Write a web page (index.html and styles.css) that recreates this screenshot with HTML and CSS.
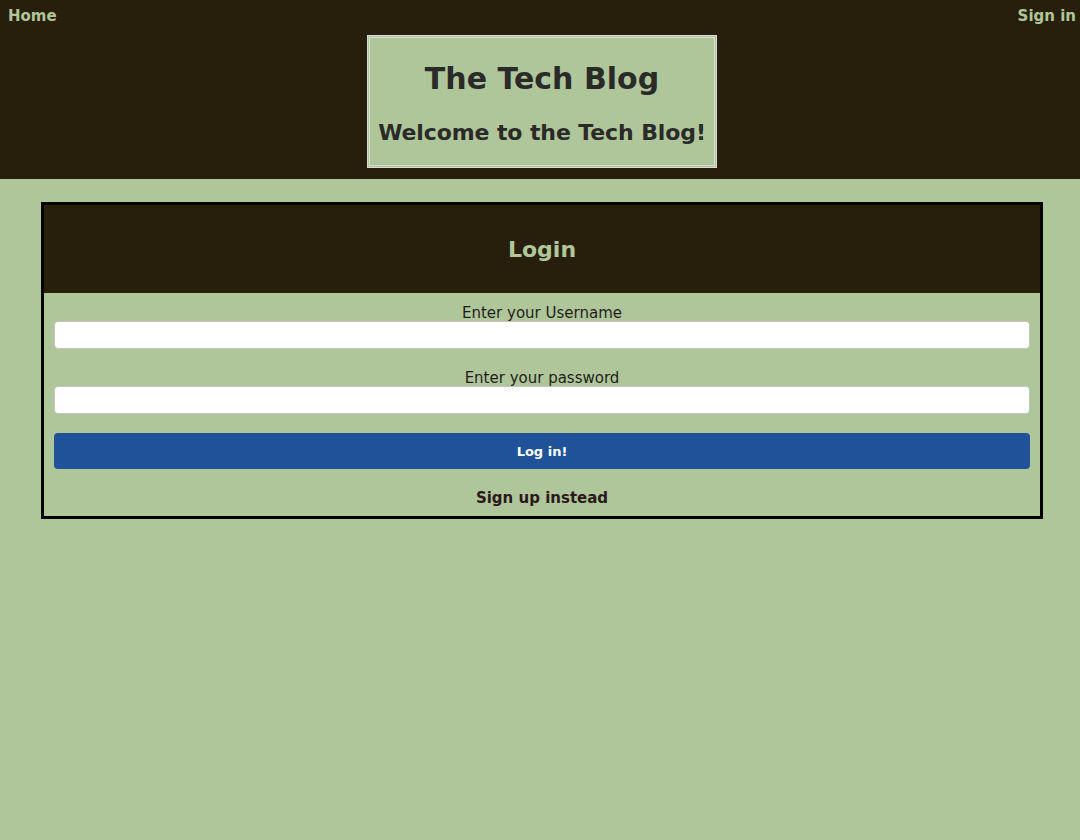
FILE: index.html
```html
<!DOCTYPE html>
<html>
<head>
<meta charset="utf-8">
<link rel="stylesheet" href="styles.css">
</head>
<body>
<header class="site-header">
  <nav class="nav">
    <a class="nav-link" href="#">Home</a>
    <a class="nav-link" href="#">Sign in</a>
  </nav>
  <div class="title-box">
    <h1 class="title">The Tech Blog</h1>
    <h2 class="subtitle">Welcome to the Tech Blog!</h2>
  </div>
</header>
<main class="main">
  <section class="card">
    <div class="card-head">
      <h2 class="card-title">Login</h2>
    </div>
    <form class="form">
      <label class="label">Enter your Username</label>
      <input class="input" type="text">
      <label class="label label-2">Enter your password</label>
      <input class="input" type="password">
      <button class="btn" type="button">Log in!</button>
      <a class="alt-link" href="#">Sign up instead</a>
    </form>
  </section>
</main>
</body>
</html>
```
FILE: styles.css
```css
html, body {
  margin: 0;
  padding: 0;
}
body {
  background: #afc59a;
  font-family: "DejaVu Sans", Verdana, sans-serif;
  min-height: 840px;
}
.site-header {
  background: #271f0b;
  height: 179px;
  display: flex;
  flex-direction: column;
  align-items: center;
}
.nav {
  align-self: stretch;
  display: flex;
  justify-content: space-between;
  padding: 6px 4px 0 8px;
  height: 30px;
  box-sizing: border-box;
}
.nav-link {
  color: #b0c69a;
  font-weight: bold;
  font-size: 15px;
  text-decoration: none;
  line-height: 20px;
}
.title-box {
  margin-top: 5px;
  margin-left: 4px;
  width: 350px;
  height: 133px;
  box-sizing: border-box;
  border: 3px double #d8dcd4;
  background: #afc59a;
  text-align: center;
  color: #2a2a28;
}
.title {
  margin: 21px 0 0;
  font-size: 30px;
  line-height: 40px;
  font-weight: bold;
}
.subtitle {
  margin: 20px 0 0;
  font-size: 22px;
  line-height: 28px;
  font-weight: bold;
  white-space: nowrap;
  letter-spacing: -0.1px;
}
.main {
  padding: 23px 37px 0 41px;
}
.card {
  border: 3px solid #000;
}
.card-head {
  background: #271f0b;
  height: 88px;
  display: flex;
  align-items: center;
  justify-content: center;
}
.card-title {
  margin: 0;
  color: #b0c69a;
  font-size: 22px;
  font-weight: bold;
}
.form {
  display: flex;
  flex-direction: column;
  align-items: center;
  padding: 12px 10px 9px;
}
.label {
  font-size: 15px;
  line-height: 16px;
  color: #1f1f1a;
}
.label-2 {
  margin-top: 21px;
}
.input {
  align-self: stretch;
  height: 28px;
  box-sizing: border-box;
  margin-top: 0;
  border: 1px solid #c4c4c4;
  border-radius: 4px;
  background: #fff;
}
.btn {
  align-self: stretch;
  margin-top: 19px;
  height: 36px;
  border: none;
  border-radius: 4px;
  background: #1f5299;
  color: #fff;
  font-family: "DejaVu Sans", sans-serif;
  font-weight: bold;
  font-size: 13px;
}
.alt-link {
  margin-top: 20px;
  color: #2a1a1a;
  font-weight: bold;
  font-size: 15px;
  line-height: 18px;
  text-decoration: none;
}
```
